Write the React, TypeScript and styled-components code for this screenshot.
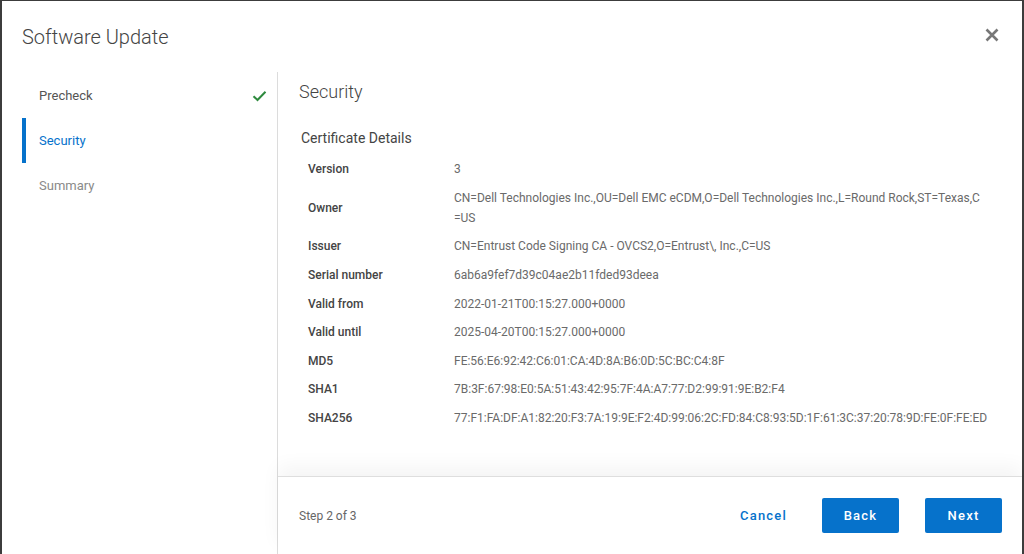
import React from "react";
import styled, { createGlobalStyle } from "styled-components";

const GlobalStyle = createGlobalStyle`
  html, body {
    margin: 0;
    padding: 0;
    background: #3c3c3c;
    font-family: Roboto, "Liberation Sans", Arial, sans-serif;
  }
  * { box-sizing: border-box; }
`;

const Dialog = styled.div`
  margin: 1px 2px 0 2px;
  height: 553px;
  background: #fff;
  display: flex;
  flex-direction: column;
  overflow: hidden;
`;

const Header = styled.div`
  height: 71px;
  flex-shrink: 0;
  display: flex;
  align-items: center;
  justify-content: space-between;
  padding: 0 20px 0 20px;
`;

const Title = styled.h1`
  margin: 0;
  font-size: 20px;
  font-weight: 300;
  color: #444;
  line-height: 26px;
`;

const CloseButton = styled.button`
  border: none;
  background: none;
  padding: 0;
  width: 20px;
  height: 20px;
  display: flex;
  align-items: center;
  justify-content: center;
  cursor: pointer;
  margin-top: -3px;
`;

const Body = styled.div`
  flex: 1;
  display: flex;
  min-height: 0;
`;

const Sidebar = styled.nav`
  width: 276px;
  flex-shrink: 0;
  border-right: 1px solid #dcdcdc;
  padding: 1px 0 0 20px;
`;

const NavItem = styled.div<{ active?: boolean; pending?: boolean }>`
  height: 45px;
  display: flex;
  align-items: center;
  justify-content: space-between;
  padding: 0 10px 0 13px;
  font-size: 13px;
  border-left: 4px solid ${(p) => (p.active ? "#0672cb" : "transparent")};
  color: ${(p) => (p.active ? "#0672cb" : p.pending ? "#8a8a8a" : "#555")};
`;

const Main = styled.main`
  flex: 1;
  display: flex;
  flex-direction: column;
  min-width: 0;
`;

const Content = styled.div`
  flex: 1;
  padding: 8px 20px 0 21px;
`;

const SectionTitle = styled.h2`
  margin: 0;
  font-size: 18px;
  font-weight: 300;
  line-height: 24px;
  color: #444;
`;

const SubTitle = styled.h3`
  margin: 24px 0 7px 2px;
  font-size: 14px;
  font-weight: 400;
  line-height: 20px;
  color: #444;
`;

const Table = styled.div`
  display: grid;
  grid-template-columns: 146px 530px;
  margin-left: 9px;
  font-size: 12px;
`;

const Label = styled.div`
  padding: 4.3px 0;
  line-height: 20px;
  font-weight: 500;
  color: #444;
  display: flex;
  align-items: center;
`;

const Value = styled.div<{ hash?: boolean }>`
  padding: 4.3px 0;
  line-height: 20px;
  color: #6a6a6a;
  word-break: break-all;
  white-space: ${(p) => (p.hash ? "nowrap" : "normal")};
`;

const Footer = styled.footer`
  height: 78px;
  flex-shrink: 0;
  border-top: 1px solid #dedede;
  box-shadow: 0 -10px 18px rgba(0, 0, 0, 0.045);
  display: flex;
  align-items: center;
  padding: 0 20px 0 21px;
  position: relative;
`;

const StepText = styled.span`
  font-size: 12px;
  color: #666;
  flex: 1;
`;

const TextButton = styled.button`
  border: none;
  background: none;
  color: #0672cb;
  font-family: inherit;
  font-size: 13px;
  font-weight: 500;
  letter-spacing: 1.2px;
  padding: 0 12px;
  height: 35px;
  margin-right: 23px;
  cursor: pointer;
`;

const PrimaryButton = styled.button`
  border: none;
  border-radius: 2px;
  background: #0672cb;
  color: #fff;
  font-family: inherit;
  font-size: 13px;
  font-weight: 500;
  letter-spacing: 1.2px;
  width: 77px;
  height: 35px;
  cursor: pointer;
  & + & {
    margin-left: 26px;
  }
`;

const steps = [
  { name: "Precheck", state: "done" },
  { name: "Security", state: "active" },
  { name: "Summary", state: "pending" },
];

// hash values (fingerprints) never wrap
const details: [string, string, boolean?][] = [
  ["Version", "3"],
  [
    "Owner",
    "CN=Dell Technologies Inc.,OU=Dell EMC eCDM,O=Dell Technologies Inc.,L=Round Rock,ST=Texas,C=US",
  ],
  ["Issuer", "CN=Entrust Code Signing CA - OVCS2,O=Entrust\\, Inc.,C=US"],
  ["Serial number", "6ab6a9fef7d39c04ae2b11fded93deea"],
  ["Valid from", "2022-01-21T00:15:27.000+0000"],
  ["Valid until", "2025-04-20T00:15:27.000+0000"],
  ["MD5", "FE:56:E6:92:42:C6:01:CA:4D:8A:B6:0D:5C:BC:C4:8F", true],
  ["SHA1", "7B:3F:67:98:E0:5A:51:43:42:95:7F:4A:A7:77:D2:99:91:9E:B2:F4", true],
  [
    "SHA256",
    "77:F1:FA:DF:A1:82:20:F3:7A:19:9E:F2:4D:99:06:2C:FD:84:C8:93:5D:1F:61:3C:37:20:78:9D:FE:0F:FE:ED",
    true,
  ],
];

const CheckIcon = () => (
  <svg width="15" height="12" viewBox="0 0 15 12">
    <path d="M1.5 6.2 L5.5 10 L13.5 1.8" fill="none" stroke="#2e8a3e" strokeWidth="2" />
  </svg>
);

const CloseIcon = () => (
  <svg width="14" height="14" viewBox="0 0 14 14">
    <path d="M1.5 1.5 L12.5 12.5 M12.5 1.5 L1.5 12.5" stroke="#777" strokeWidth="2.6" />
  </svg>
);

export default function App() {
  return (
    <>
      <GlobalStyle />
      <Dialog>
        <Header>
          <Title>Software Update</Title>
          <CloseButton aria-label="Close">
            <CloseIcon />
          </CloseButton>
        </Header>
        <Body>
          <Sidebar>
            {steps.map((s) => (
              <NavItem key={s.name} active={s.state === "active"} pending={s.state === "pending"}>
                <span>{s.name}</span>
                {s.state === "done" && <CheckIcon />}
              </NavItem>
            ))}
          </Sidebar>
          <Main>
            <Content>
              <SectionTitle>Security</SectionTitle>
              <SubTitle>Certificate Details</SubTitle>
              <Table>
                {details.map(([k, v, hash]) => (
                  <React.Fragment key={k}>
                    <Label>{k}</Label>
                    <Value hash={hash}>{v}</Value>
                  </React.Fragment>
                ))}
              </Table>
            </Content>
            <Footer>
              <StepText>Step 2 of 3</StepText>
              <TextButton>Cancel</TextButton>
              <PrimaryButton>Back</PrimaryButton>
              <PrimaryButton>Next</PrimaryButton>
            </Footer>
          </Main>
        </Body>
      </Dialog>
    </>
  );
}
